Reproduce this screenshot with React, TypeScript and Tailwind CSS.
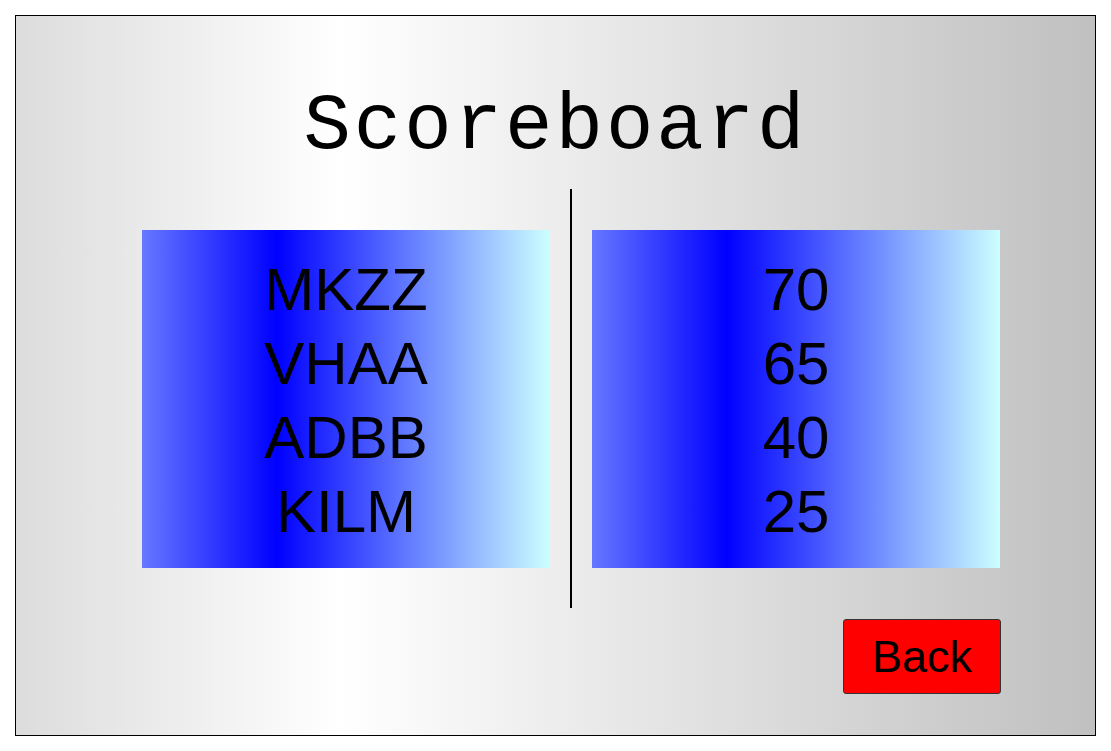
const names = ["MKZZ", "VHAA", "ADBB", "KILM"];
const scores = [70, 65, 40, 25];

const ScorePanel = ({ rows }: { rows: (string | number)[] }) => (
  <div className="flex h-[338px] w-[408px] flex-col items-center justify-center pt-[5px] bg-[linear-gradient(to_right,#6677ff_0%,#0000ff_33%,#ccffff_100%)]">
    {rows.map((r) => (
      <div key={r} className="font-['Liberation_Sans',Arial,sans-serif] text-[60px] leading-[74px] text-black">
        {r}
      </div>
    ))}
  </div>
);

export default function App() {
  return (
    <div className="h-[751px] w-[1111px] bg-white p-[15px]">
      <div className="flex h-[721px] w-[1081px] flex-col border border-black bg-[linear-gradient(to_right,#dcdcdc_0%,#ffffff_30%,#c0c0c0_100%)]">
        {/* Title */}
        <h1 className="mt-[71px] text-center font-['Liberation_Mono','Courier_New',monospace] text-[79px] leading-[80px] tracking-[3px] text-black">
          Scoreboard
        </h1>

        {/* Names | Scores */}
        <div className="mt-[22px] flex h-[419px] items-center pl-[126px] pr-[95px]">
          <ScorePanel rows={names} />
          <div className="mx-[20px] h-full w-[2px] bg-black" />
          <ScorePanel rows={scores} />
        </div>

        {/* Back */}
        <div className="mt-[11px] flex justify-end pr-[94px]">
          <button className="h-[75px] w-[158px] rounded-[3px] border border-[#333] bg-[#ff0000] font-['Liberation_Sans',Arial,sans-serif] text-[45px] leading-none text-black">
            Back
          </button>
        </div>
      </div>
    </div>
  );
}
